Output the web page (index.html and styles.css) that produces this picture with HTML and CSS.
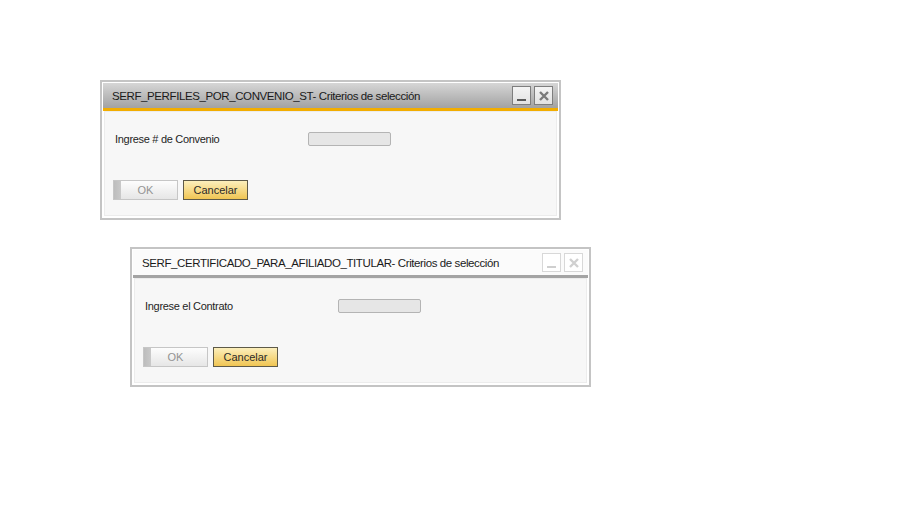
FILE: index.html
```html
<!DOCTYPE html>
<html lang="es">
<head>
    <meta charset="UTF-8">
    <title>Criterios de selección</title>
    <link rel="stylesheet" href="styles.css">
</head>
<body>
    <div class="desktop">
        <div class="window window-first">
            <div class="titlebar">
                <span class="title">SERF_PERFILES_POR_CONVENIO_ST- Criterios de selección</span>
                <div class="title-btns">
                    <span class="tbtn tbtn-min"></span>
                    <span class="tbtn tbtn-close">
                        <svg width="12" height="12" viewBox="0 0 12 12"><path d="M2 2 L10 10 M10 2 L2 10" stroke="currentColor" stroke-width="2.4"/></svg>
                    </span>
                </div>
            </div>
            <div class="panel">
                <div class="field-row">
                    <label class="field-label">Ingrese # de Convenio</label>
                    <input class="field-input" type="text">
                </div>
                <div class="btn-row">
                    <button class="btn btn-ok">OK</button>
                    <button class="btn btn-cancel">Cancelar</button>
                </div>
            </div>
        </div>

        <div class="window window-second inactive">
            <div class="titlebar">
                <span class="title">SERF_CERTIFICADO_PARA_AFILIADO_TITULAR- Criterios de selección</span>
                <div class="title-btns">
                    <span class="tbtn tbtn-min"></span>
                    <span class="tbtn tbtn-close">
                        <svg width="12" height="12" viewBox="0 0 12 12"><path d="M2 2 L10 10 M10 2 L2 10" stroke="currentColor" stroke-width="2.4"/></svg>
                    </span>
                </div>
            </div>
            <div class="panel">
                <div class="field-row">
                    <label class="field-label">Ingrese el Contrato</label>
                    <input class="field-input" type="text">
                </div>
                <div class="btn-row">
                    <button class="btn btn-ok">OK</button>
                    <button class="btn btn-cancel">Cancelar</button>
                </div>
            </div>
        </div>
    </div>
</body>
</html>
```

FILE: styles.css
```css
html, body {
    margin: 0;
    padding: 0;
    background: #fff;
}
.desktop {
    padding-top: 80px;
    font-family: "Liberation Sans", Arial, sans-serif;
    color: #222;
}
.window {
    width: 461px;
    box-sizing: border-box;
    border: 2px solid #c4c4c4;
    padding: 1px;
    background: #fff;
}
.window-first {
    margin-left: 100px;
}
.window-second {
    margin-left: 130px;
    margin-top: 27px;
}
.titlebar {
    height: 25px;
    display: flex;
    align-items: center;
    justify-content: space-between;
    padding-left: 9px;
    padding-right: 5px;
    background: linear-gradient(#d6d6d6, #a2a2a2);
    border-bottom: 3px solid #f2ad00;
}
.title {
    font-size: 11.5px;
    color: #1a1a1a;
    letter-spacing: -0.4px;
    padding-top: 1px;
}
.title-btns {
    display: flex;
    gap: 3px;
}
.tbtn {
    width: 17px;
    height: 17px;
    border: 1px solid #7e7e7e;
    background: linear-gradient(#f4f4f4, #e2e2e2);
    display: flex;
    align-items: center;
    justify-content: center;
    position: relative;
    color: #7a7a7a;
}
.tbtn-min::after {
    content: "";
    position: absolute;
    left: 4px;
    right: 4px;
    bottom: 3px;
    height: 2px;
    background: #5a5a5a;
}
.panel {
    margin: 0 1px 1px;
    border: 1px solid #ececec;
    background: #f7f7f7;
    padding: 20px 8px 15px;
}
.field-row {
    display: flex;
    align-items: center;
    height: 14px;
}
.field-label {
    width: 193px;
    padding-left: 2px;
    font-size: 11px;
    letter-spacing: -0.3px;
    color: #1e1e1e;
}
.field-input {
    width: 83px;
    height: 14px;
    box-sizing: border-box;
    border: 1px solid #b4b4b4;
    border-radius: 2px;
    background: #e6e6e6;
    padding: 0;
    margin: 0;
}
.btn-row {
    display: flex;
    gap: 5px;
    margin-top: 34px;
}
.btn {
    width: 65px;
    height: 20px;
    box-sizing: border-box;
    font-family: "Liberation Sans", Arial, sans-serif;
    font-size: 11px;
    padding: 0;
    margin: 0;
}
.btn-ok {
    border: 1px solid #c6c6c6;
    color: #939393;
    background: linear-gradient(90deg, #bdbdbd 0, #c9c9c9 7px, transparent 7px),
                linear-gradient(#fdfdfd, #e6e6e6);
}
.btn-cancel {
    border: 1px solid #5e5a48;
    color: #2a2a2a;
    background: linear-gradient(#fcefbc, #f0c553);
}
.inactive .titlebar {
    background: #fbfbfb;
    border-bottom-color: #a4a4a4;
}
.inactive .tbtn {
    border-color: #d8d8d8;
    background: #fff;
    color: #d0d0d0;
}
.inactive .tbtn-min::after {
    background: #cfcfcf;
}
```
